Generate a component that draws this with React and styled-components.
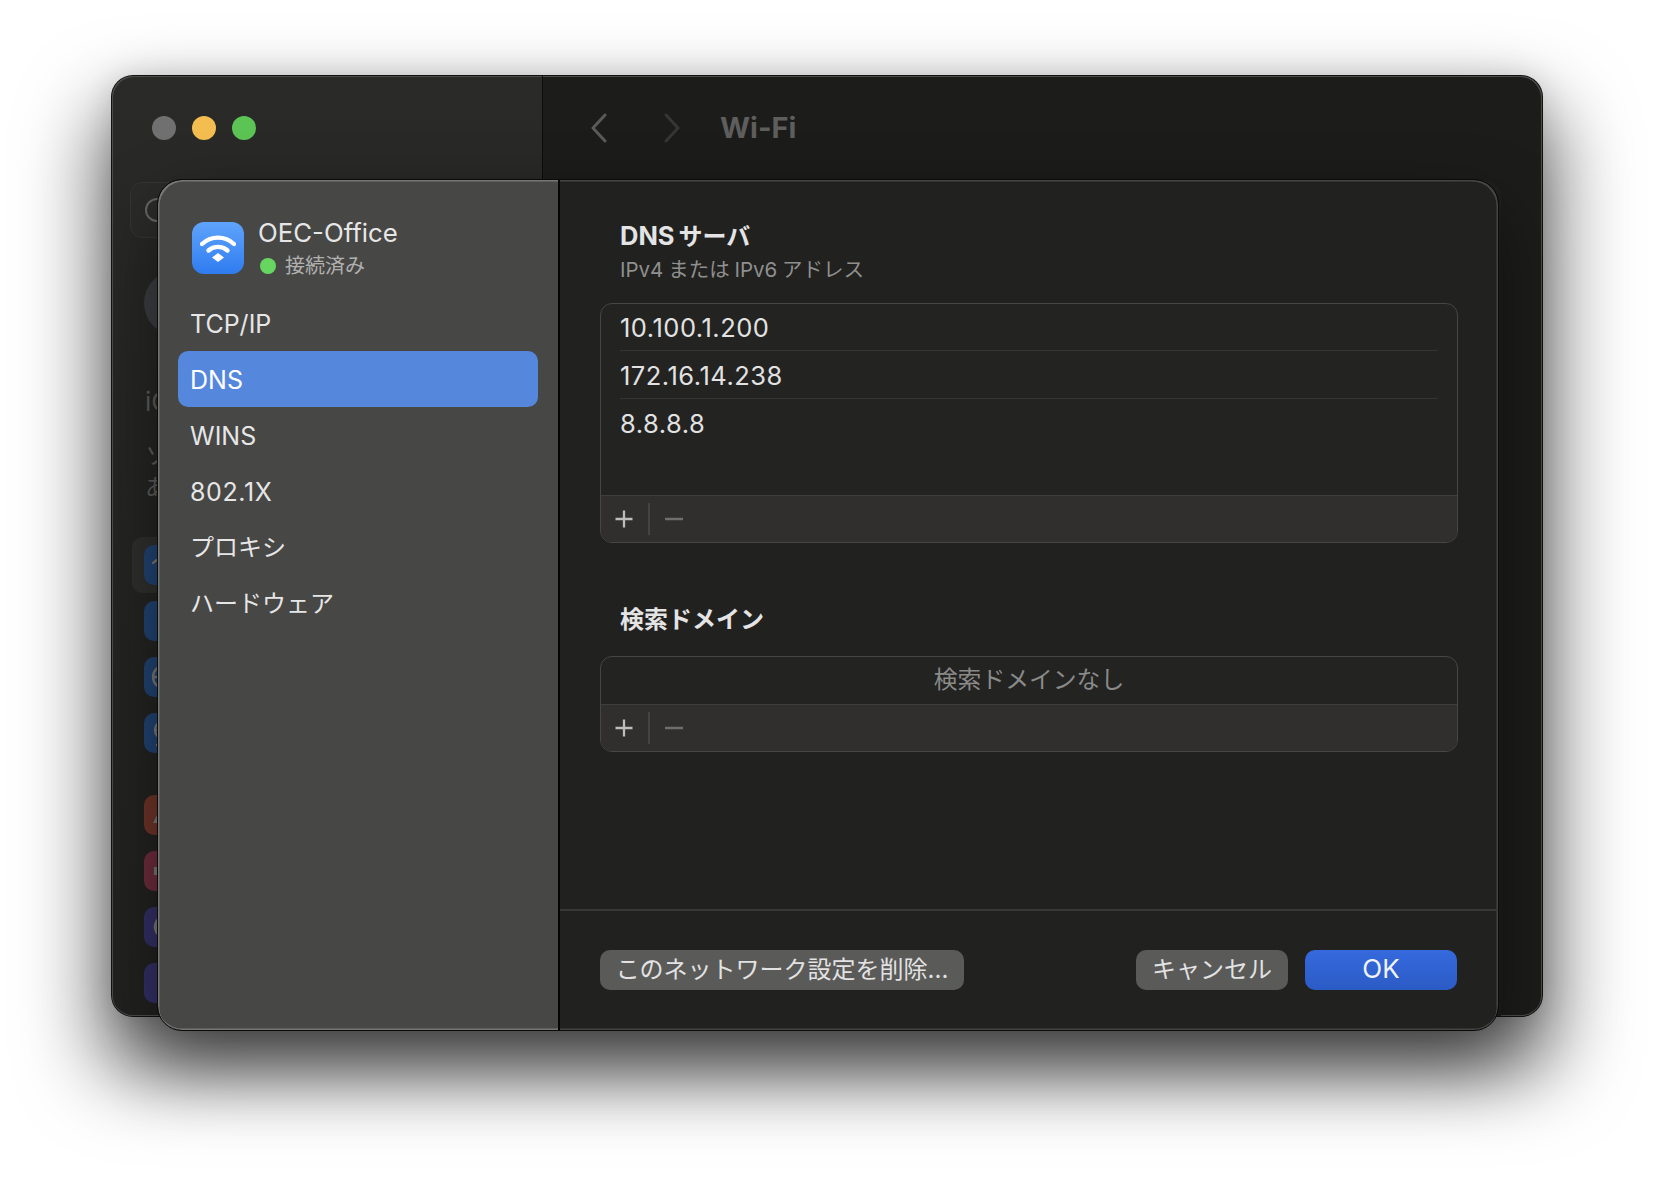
import React from "react";
import styled, { createGlobalStyle } from "styled-components";

const Global = createGlobalStyle`
  html, body { margin: 0; padding: 0; background: #fff; }
  body { width: 1654px; height: 1178px; overflow: hidden; font-family: Inter, "Noto Sans CJK JP", "Liberation Sans", sans-serif; -webkit-font-smoothing: antialiased; }
`;

const Stage = styled.div`
  width: 1654px;
  height: 1178px;
  padding: 76px 0 0 112px;
  box-sizing: border-box;
  overflow: hidden;
`;

const Win = styled.div`
  position: relative;
  width: 1430px;
  height: 940px;
  box-sizing: border-box;
  border-radius: 21px;
  display: grid;
  grid-template-columns: 431px 1fr;
  background: #1c1c1b;
  box-shadow: 0 0 0 1px #111, 0 44px 80px 12px rgba(0, 0, 0, 0.6), 0 0 30px rgba(0, 0, 0, 0.12);
`;

const SideBehind = styled.aside`
  border-radius: 21px 0 0 21px;
  border-right: 1px solid #0e0e0e;
  box-shadow: inset 1px 1px 0 #4c4c4b, inset 0 -1px 0 #4c4c4b;
  background: linear-gradient(180deg, #2a2a28 0, #252523 40%, #212120 100%);
  padding: 40px 0 0 32px;
  box-sizing: border-box;
  overflow: hidden;
`;

const Lights = styled.div`
  display: flex;
  gap: 16px;
  margin-left: 8px;
`;

const Light = styled.span`
  width: 24px;
  height: 24px;
  border-radius: 50%;
  background: ${(p) => p.$c};
`;

const SearchBehind = styled.div`
  width: 200px;
  height: 56px;
  margin: 42px 0 0 -14px;
  border: 1px solid #353534;
  border-radius: 12px;
  background: #2b2b2a;
  display: flex;
  align-items: center;
  padding-left: 14px;
  box-sizing: border-box;
`;

const SearchRing = styled.span`
  width: 20px;
  height: 20px;
  border: 2px solid #666;
  border-radius: 50%;
`;

const AvatarBehind = styled.div`
  width: 66px;
  height: 66px;
  margin: 32px 0 0 0;
  border-radius: 50%;
  background: #3c3d42;
`;

const DimText = styled.div`
  color: #5c5c5b;
  font-size: ${(p) => p.$size}px;
  line-height: ${(p) => p.$lh}px;
  margin-top: ${(p) => p.$top}px;
  margin-left: 1px;
  width: 13px;
  height: ${(p) => p.$lh}px;
  overflow: hidden;
  white-space: nowrap;
`;

const IconStack = styled.div`
  display: flex;
  flex-direction: column;
  gap: 16px;
  margin-top: ${(p) => p.$top}px;
  position: relative;
`;

const SelectedBehind = styled.div`
  position: absolute;
  left: -12px;
  top: -8px;
  width: 120px;
  height: 56px;
  border-radius: 10px;
  background: #2f2f2e;
`;

const AppIcon = styled.div`
  position: relative;
  width: 40px;
  height: 40px;
  border-radius: 10px;
  background: ${(p) => p.$c};
  display: flex;
  align-items: center;
  justify-content: center;
`;

const MainBehind = styled.main`
  border-radius: 0 21px 21px 0;
  box-shadow: inset -1px 1px 0 #4c4c4b, inset 0 -1px 0 #4c4c4b;
  background: #1c1c1b;
  display: flex;
  flex-direction: column;
`;

const TitleBar = styled.div`
  height: 104px;
  flex: none;
  display: flex;
  align-items: center;
  padding: 0 0 0 47px;
  gap: 55px;
`;

const ContentBehind = styled.div`
  flex: 1;
  margin-right: 41px;
  border-radius: 0 16px 0 0;
  background: #1f1f1e;
`;

const Chev = styled.svg`
  width: 18px;
  height: 30px;
  flex: none;
`;

const WinTitle = styled.div`
  font-size: 29px;
  font-weight: 700;
  color: #5e5e5d;
  margin-left: -16px;
  margin-top: -1px;
`;

const Dialog = styled.section`
  position: absolute;
  left: 46px;
  top: 104px;
  width: 1340px;
  height: 850px;
  box-sizing: border-box;
  border-radius: 24px;
  display: grid;
  grid-template-columns: 402px 1fr;
  overflow: hidden;
  background: #212120;
  outline: 1px solid #0b0b0b;
  box-shadow: 0 28px 70px rgba(0, 0, 0, 0.45);
`;

const DialogSide = styled.nav`
  background: #474746;
  border-right: 2px solid #050505;
  box-shadow: inset 2px 2px 0 -0.5px #767675, inset 0 -2px 0 -0.5px #767675;
  border-radius: 24px 0 0 24px;
  padding: 42px 20px 0 20px;
  box-sizing: border-box;
`;

const NetHead = styled.header`
  display: flex;
  gap: 14px;
  padding-left: 14px;
  height: 72px;
  margin-bottom: 1px;
`;

const WifiTile = styled.div`
  width: 52px;
  height: 52px;
  flex: none;
  border-radius: 12px;
  background: linear-gradient(180deg, #5fa4fb 0%, #2f7cf0 100%);
  display: flex;
  align-items: center;
  justify-content: center;
`;

const NetName = styled.div`
  font-size: 25.8px;
  line-height: 30px;
  margin-top: -4px;
  color: #e6e6e6;
`;

const NetStatus = styled.div`
  display: flex;
  align-items: center;
  gap: 9px;
  margin-top: 4px;
  font-size: 20px;
  line-height: 28px;
  color: #b0b0af;
`;

const StatusDot = styled.span`
  width: 16px;
  height: 16px;
  margin-left: 2px;
  border-radius: 50%;
  background: #66d660;
`;

const NavItem = styled.div`
  height: 56px;
  box-sizing: border-box;
  display: flex;
  align-items: center;
  padding: ${(p) => (p.$cjk ? 0 : 2)}px 0 ${(p) => (p.$cjk ? 4 : 0)}px 12px;
  border-radius: 10px;
  font-size: ${(p) => (p.$cjk ? 24 : 25)}px;
  letter-spacing: ${(p) => (p.$num ? 0.6 : 0)}px;
  color: ${(p) => (p.$active ? "#ffffff" : "#e6e6e6")};
  background: ${(p) => (p.$active ? "#5587dd" : "transparent")};
`;

const DialogMain = styled.div`
  display: flex;
  flex-direction: column;
  border-radius: 0 24px 24px 0;
  box-shadow: inset -2px 2px 0 -0.5px #454544, inset 0 -2px 0 -0.5px #454544;
`;

const Body = styled.div`
  flex: 1;
  padding: 41px 40px 0 40px;
`;

const SectionTitle = styled.h2`
  margin: ${(p) => p.$top || 0}px 0 0 20px;
  font-size: 24px;
  line-height: 30px;
  font-weight: 700;
  color: #e4e4e4;
`;

const TitleLatin = styled.span`
  font-size: 25.5px;
  margin-right: 4px;
`;

const SectionHint = styled.p`
  margin: 5px 0 0 20px;
  font-size: 20.5px;
  line-height: 26px;
  word-spacing: -1px;
  color: #8f8f8e;
`;

const ListBox = styled.div`
  margin-top: ${(p) => p.$top}px;
  border: 1.5px solid #464645;
  border-radius: 12px;
  overflow: hidden;
  background: #232322;
  box-sizing: border-box;
  display: flex;
  flex-direction: column;
  height: ${(p) => p.$h}px;
`;

const Rows = styled.div`
  flex: 1;
  padding: 0 19px;
  margin-top: -1.5px;
`;

const Row = styled.div`
  height: 47px;
  box-sizing: border-box;
  padding-top: 3px;
  margin-bottom: 1px;
  display: flex;
  align-items: center;
  font-size: 25.5px;
  letter-spacing: 0.5px;
  color: #e2e2e2;
  box-shadow: ${(p) => (p.$last ? "none" : "0 1px 0 #343433")};
`;

const Empty = styled.div`
  flex: 1;
  box-sizing: border-box;
  padding-bottom: 7px;
  display: flex;
  align-items: center;
  justify-content: center;
  font-size: 23.8px;
  color: #8a8a89;
`;

const ListFoot = styled.div`
  height: 47px;
  flex: none;
  display: flex;
  align-items: center;
  padding-left: 13px;
  background: #302f2e;
  border-top: 1.5px solid #3e3e3d;
  box-sizing: border-box;
`;

const FootIcon = styled.svg`
  width: 20px;
  height: 20px;
  flex: none;
`;

const FootSep = styled.span`
  width: 1.5px;
  height: 32px;
  margin: 0 14px;
  background: #444443;
`;

const Footer = styled.footer`
  height: 121px;
  box-sizing: border-box;
  border-top: 2px solid #383837;
  padding: 39px 41px 0 40px;
  display: flex;
  justify-content: space-between;
`;

const Actions = styled.div`
  display: flex;
  gap: 17px;
`;

const Btn = styled.button`
  height: 40px;
  width: ${(p) => p.$w}px;
  padding: 0 0 ${(p) => (p.$primary ? 3 : 6)}px;
  box-sizing: border-box;
  border: 0;
  border-radius: 10px;
  font-family: inherit;
  font-size: ${(p) => (p.$primary ? 26 : 24)}px;
  display: flex;
  align-items: center;
  justify-content: center;
  color: ${(p) => (p.$primary ? "#f0f4ff" : "#e2e2e2")};
  background: ${(p) => (p.$primary ? "linear-gradient(180deg, #3569dd 0%, #2b5bc5 100%)" : "#5a5a59")};
`;

const Wifi = () => (
  <svg width="36" height="30" viewBox="0 0 36 30" fill="none">
    <path d="M2 11C11 2.5 25 2.5 34 11" stroke="#fff" strokeWidth="4.4" strokeLinecap="round" />
    <path d="M8.5 17.5C13.8 12.7 22.2 12.7 27.5 17.5" stroke="#fff" strokeWidth="4.4" strokeLinecap="round" />
    <path d="M18 20L24 24.5L18 29L12 24.5Z" fill="#fff" />
  </svg>
);

const Plus = () => (
  <FootIcon viewBox="0 0 20 20"><path d="M10 1.5V18.5M1.5 10H18.5" stroke="#bcbcbb" strokeWidth="2.3" /></FootIcon>
);
const Minus = () => (
  <FootIcon viewBox="0 0 20 20"><path d="M1 10H19" stroke="#6e6e6d" strokeWidth="2.3" /></FootIcon>
);

const Glyph = ({ d, fill }) => (
  <svg width="30" height="30" viewBox="0 0 30 30" fill={fill ? "#777" : "none"} stroke={fill ? "none" : "#777"} strokeWidth="2.4" strokeLinecap="round">
    <path d={d} />
  </svg>
);

export default function App() {
  return (
    <>
      <Global />
      <Stage>
        <Win>
          <SideBehind>
            <Lights>
              <Light $c="#707070" />
              <Light $c="#f3bd4f" />
              <Light $c="#5cc454" />
            </Lights>
            <SearchBehind><SearchRing /></SearchBehind>
            <AvatarBehind />
            <DimText $size={26} $lh={30} $top={51}>iC</DimText>
            <DimText $size={24} $lh={32} $top={23}>ソ</DimText>
            <DimText $size={24} $lh={32} $top={0}>あ</DimText>
            <IconStack $top={41}>
              <SelectedBehind />
              <AppIcon $c="#214372"><Glyph d="M4 13C10 7 20 7 26 13M9 18C12 15 18 15 21 18" /></AppIcon>
              <AppIcon $c="#214372"><Glyph d="M9 9L21 21L15 26V4L21 9L9 21" /></AppIcon>
              <AppIcon $c="#214372"><Glyph d="M15 4A11 11 0 1 0 15 26A11 11 0 1 0 15 4M4 15H26M15 4C10 10 10 20 15 26M15 4C20 10 20 20 15 26" /></AppIcon>
              <AppIcon $c="#214372"><Glyph d="M15 3A9 9 0 1 0 15 21A9 9 0 1 0 15 3M6 12H24M15 21V26M8 27H22" /></AppIcon>
            </IconStack>
            <IconStack $top={42}>
              <AppIcon $c="#6e3428"><Glyph fill d="M15 4C9 4 8 10 8 15L4 23H26L22 15C22 10 21 4 15 4Z" /></AppIcon>
              <AppIcon $c="#6d2c3c"><Glyph fill d="M5 11H11L20 4V26L11 19H5Z" /></AppIcon>
              <AppIcon $c="#332f66"><Glyph fill d="M18 3A12 12 0 1 0 27 21A12 12 0 0 1 18 3Z" /></AppIcon>
              <AppIcon $c="#332f66"><Glyph fill d="M8 4H22V8L17 15L22 22V26H8V22L13 15L8 8Z" /></AppIcon>
            </IconStack>
          </SideBehind>
          <MainBehind>
            <TitleBar>
              <Chev viewBox="0 0 18 30"><path d="M15 2L3 15L15 28" fill="none" stroke="#5a5a59" strokeWidth="3" strokeLinecap="round" strokeLinejoin="round" /></Chev>
              <Chev viewBox="0 0 18 30"><path d="M3 2L15 15L3 28" fill="none" stroke="#363635" strokeWidth="3" strokeLinecap="round" strokeLinejoin="round" /></Chev>
              <WinTitle>Wi-Fi</WinTitle>
            </TitleBar>
            <ContentBehind />
          </MainBehind>
          <Dialog>
            <DialogSide>
              <NetHead>
                <WifiTile><Wifi /></WifiTile>
                <div>
                  <NetName>OEC-Office</NetName>
                  <NetStatus><StatusDot />接続済み</NetStatus>
                </div>
              </NetHead>
              <NavItem>TCP/IP</NavItem>
              <NavItem $active>DNS</NavItem>
              <NavItem>WINS</NavItem>
              <NavItem $num>802.1X</NavItem>
              <NavItem $cjk>プロキシ</NavItem>
              <NavItem $cjk>ハードウェア</NavItem>
            </DialogSide>
            <DialogMain>
              <Body>
                <SectionTitle><TitleLatin>DNS</TitleLatin>サーバ</SectionTitle>
                <SectionHint>IPv4 または IPv6 アドレス</SectionHint>
                <ListBox $top={20} $h={240}>
                  <Rows>
                    <Row>10.100.1.200</Row>
                    <Row>172.16.14.238</Row>
                    <Row $last>8.8.8.8</Row>
                  </Rows>
                  <ListFoot><Plus /><FootSep /><Minus /></ListFoot>
                </ListBox>
                <SectionTitle $top={62}>検索ドメイン</SectionTitle>
                <ListBox $top={21} $h={96}>
                  <Empty>検索ドメインなし</Empty>
                  <ListFoot><Plus /><FootSep /><Minus /></ListFoot>
                </ListBox>
              </Body>
              <Footer>
                <Btn $w={364}>このネットワーク設定を削除...</Btn>
                <Actions>
                  <Btn $w={152}>キャンセル</Btn>
                  <Btn $w={152} $primary>OK</Btn>
                </Actions>
              </Footer>
            </DialogMain>
          </Dialog>
        </Win>
      </Stage>
    </>
  );
}
